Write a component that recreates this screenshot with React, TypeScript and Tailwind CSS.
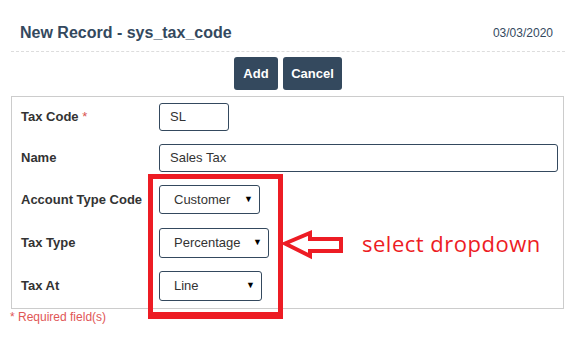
import React from 'react';

const Field = ({ children }: { children: React.ReactNode }) => (
  <div className="h-full flex items-center pl-[10px] border border-[#34495e] rounded-[3px] text-[13px] text-[#333]">
    {children}
  </div>
);

const Select = ({ value, width }: { value: string; width: string }) => (
  <div className={`${width} h-full flex items-center justify-between pl-[14px] pr-[6px] border border-[#34495e] rounded-[3px] text-[13px] text-[#333]`}>
    <span>{value}</span>
    <span className="text-[9px] text-black">▼</span>
  </div>
);

const Row = ({ label, required, className, children }: { label: string; required?: boolean; className: string; children: React.ReactNode }) => (
  <div className={`flex items-center ${className}`}>
    <div className="w-[147px] pl-[9px] text-[13px] font-bold text-[#333]">
      {label}
      {required && <span className="text-[#d9534f] font-normal"> *</span>}
    </div>
    <div className="h-full">{children}</div>
  </div>
);

const App = () => {
  return (
    <div className="relative w-[580px] h-[339px] bg-white font-['Liberation_Sans',Arial,sans-serif] overflow-hidden">
      {/* Header */}
      <div className="ml-[11px] mr-[15px] h-[52px] pt-[14px] flex items-center justify-between pl-[9px] pr-[12px] border-b border-dashed border-[#ddd]">
        <h1 className="text-[16px] font-bold text-[#34495e]">New Record - sys_tax_code</h1>
        <span className="text-[12px] text-[#34495e]">03/03/2020</span>
      </div>

      {/* Actions */}
      <div className="ml-[11px] mr-[15px] mt-[5px] flex justify-center gap-[5px]">
        <button className="h-[33px] w-[44px] rounded-[3px] bg-[#34495e] text-white text-[13px] font-bold">Add</button>
        <button className="h-[33px] w-[59px] rounded-[3px] bg-[#34495e] text-white text-[13px] font-bold">Cancel</button>
      </div>

      {/* Form */}
      <div className="ml-[11px] mt-[6px] w-[553px] h-[213px] border border-[#ccc] pt-[6px] flex flex-col">
        <Row label="Tax Code" required className="h-[28px]">
          <div className="w-[70px] h-full"><Field>SL</Field></div>
        </Row>
        <Row label="Name" className="h-[28px] mt-[13px]">
          <div className="w-[399px] h-full"><Field>Sales Tax</Field></div>
        </Row>
        <Row label="Account Type Code" className="h-[29px] mt-[13px]">
          <Select value="Customer" width="w-[101px]" />
        </Row>
        <Row label="Tax Type" className="h-[30px] mt-[14px]">
          <Select value="Percentage" width="w-[110px]" />
        </Row>
        <Row label="Tax At" className="h-[30px] mt-[13px]">
          <Select value="Line" width="w-[103px]" />
        </Row>
      </div>
      <p className="pl-[10px] mt-[1px] text-[12px] leading-[14px] text-[#df5656]">* Required field(s)</p>

      {/* Annotation overlay */}
      <div className="absolute left-[148px] top-[174px] w-[135px] h-[145px] border-[5px] border-b-[7px] border-[#ed1c24]" />
      <svg className="absolute left-[281px] top-[229px]" width="66" height="34" viewBox="0 0 66 34">
        <polygon
          points="4,14.5 29,4 29,10 60,10 60,22 29,22 29,27"
          fill="white"
          stroke="#ed1c24"
          strokeWidth="4"
          strokeLinejoin="miter"
        />
      </svg>
      <div className="absolute left-[362px] top-[228px] text-[22px] leading-[30px] tracking-[0.5px] text-[#ed1c24] font-['Open_Sans',sans-serif]">
        select dropdown
      </div>
    </div>
  );
};

export default App;
